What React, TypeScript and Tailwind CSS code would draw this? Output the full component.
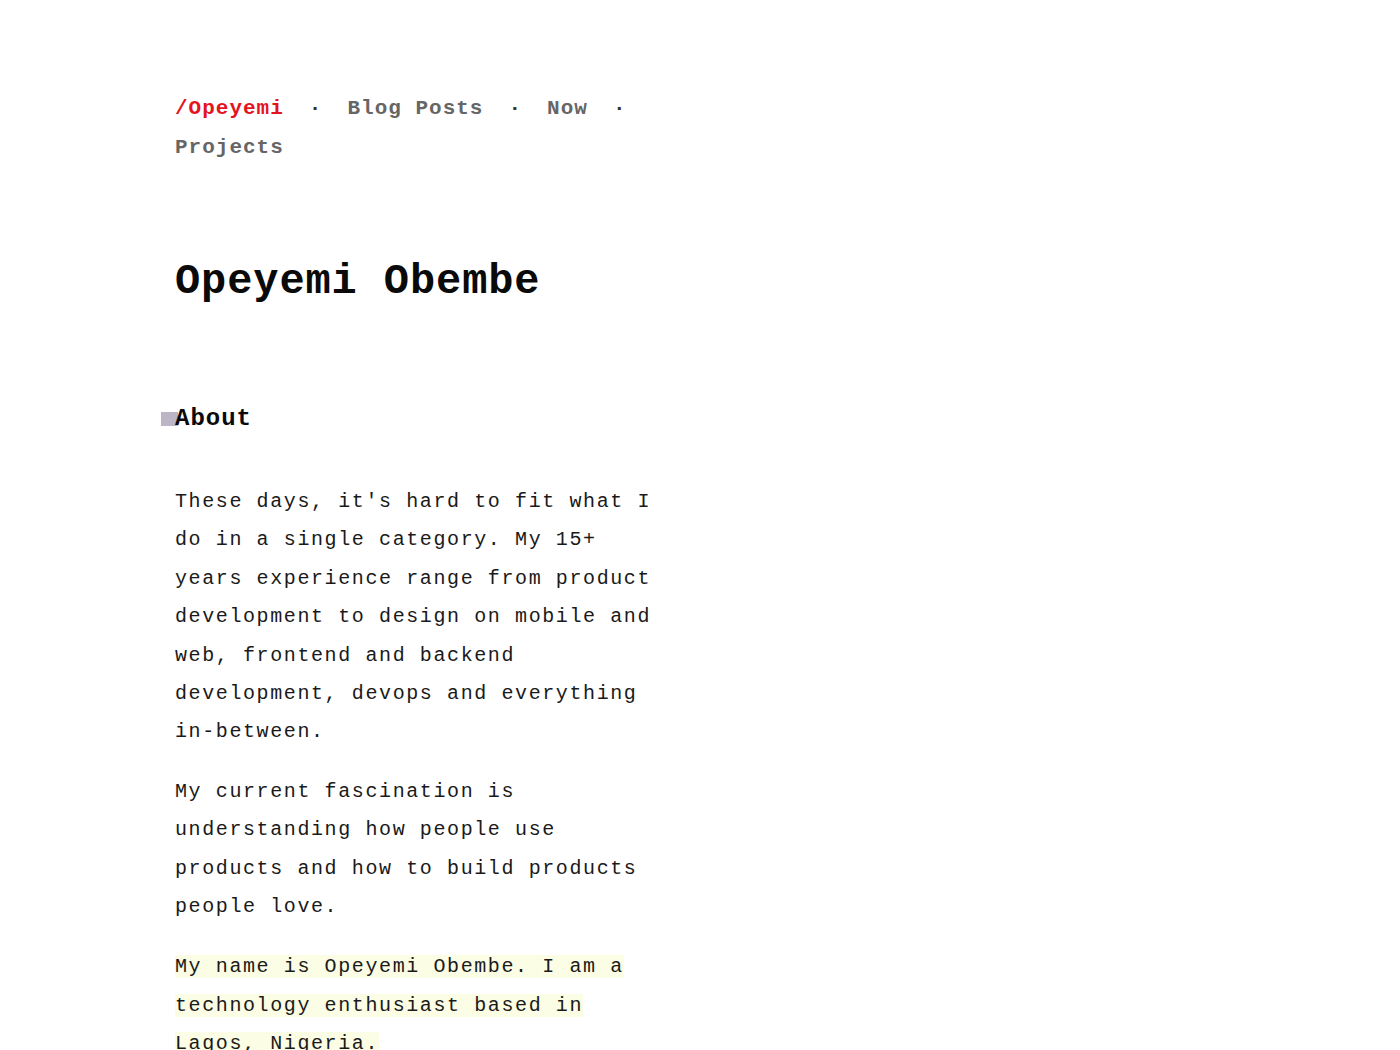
import React from "react";

export default function App() {
  const mono = { fontFamily: '"Liberation Mono", "DejaVu Sans Mono", monospace' };
  const Dot = () => <span className="mx-[25px] text-[#333]">·</span>;
  return (
    <div className="min-h-[1050px] bg-white" style={mono}>
      <div className="pl-[175px] pt-[92px] w-[665px]">
        <nav className="flex flex-wrap text-[21px] font-bold leading-[39px] tracking-[1px] text-[#666666] mt-[-3px]">
          <span className="whitespace-nowrap">
            <a className="text-[#e3141e]">/Opeyemi</a>
            <Dot />
          </span>
          <span className="whitespace-nowrap">
            <a>Blog Posts</a>
            <Dot />
          </span>
          <span className="whitespace-nowrap">
            <a>Now</a>
            <Dot />
          </span>
          <span className="whitespace-nowrap">
            <a>Projects</a>
          </span>
        </nav>
        <h1 className="mt-[90px] text-[42px] leading-[50px] font-bold tracking-[0.9px] text-[#0a0a0a]">
          Opeyemi Obembe
        </h1>
        <h2 className="relative mt-[97px] text-[24px] leading-[30px] font-bold tracking-[1px] text-[#0a0a0a]">
          <span className="absolute left-[-14px] top-[8px] w-[17px] h-[14px] bg-[#bcb5c6]" />
          <span className="relative">About</span>
        </h2>
        <div className="mt-[49px] text-[20px] leading-[38.4px] tracking-[1.6px] text-[#1a1a1a]">
          <p>
            These days, it's hard to fit what I do in a single category. My 15+ years experience range from product development to design on mobile and web, frontend and backend development, devops and everything in-between.
          </p>
          <p className="mt-[21px]">
            My current fascination is understanding how people use products and how to build products people love.
          </p>
          <p className="mt-[22px]">
            <span className="bg-[#fbfde4]">
              My name is Opeyemi Obembe. I am a technology enthusiast based in Lagos, Nigeria.
            </span>
          </p>
        </div>
      </div>
    </div>
  );
}
